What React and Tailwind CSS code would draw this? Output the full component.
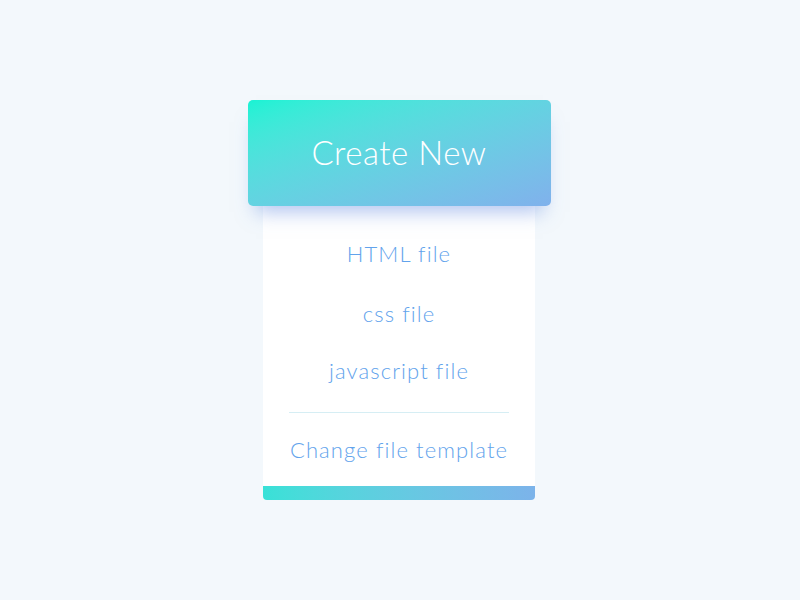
import React from "react";

const items = ["HTML file", "css file", "javascript file"];

export default function App() {
  return (
    <div
      className="min-h-[600px] w-full bg-[#f3f8fc] flex flex-col items-center pt-[100px]"
      style={{ fontFamily: "Lato, 'Open Sans', sans-serif" }}
    >
      <div className="flex flex-col items-center -translate-x-px">
        <button className="relative z-10 w-[303px] h-[106px] rounded-[5px] bg-gradient-to-br from-[#17f3d4] to-[#80b1ec] text-white text-[33px] font-light tracking-[0.5px] shadow-[0_14px_18px_-8px_rgba(100,140,225,0.5)]">
          Create New
        </button>

        <div className="w-[272px] bg-white rounded-b-[4px] overflow-hidden flex flex-col items-center text-[#62a3ec] text-[22px] font-light tracking-[1.1px]">
          <div className="h-[30px] leading-[30px] mt-[33px]">{items[0]}</div>
          <div className="h-[30px] leading-[30px] mt-[30px]">{items[1]}</div>
          <div className="h-[30px] leading-[30px] mt-[27px]">{items[2]}</div>
          <div className="w-[220px] h-px bg-[#d6eef4] mt-[26px]" />
          <div className="h-[30px] leading-[30px] mt-[22px]">Change file template</div>
          <div className="w-full h-[14px] mt-[21px] bg-gradient-to-r from-[#38e1d7] to-[#7cb3ea]" />
        </div>
      </div>
    </div>
  );
}
